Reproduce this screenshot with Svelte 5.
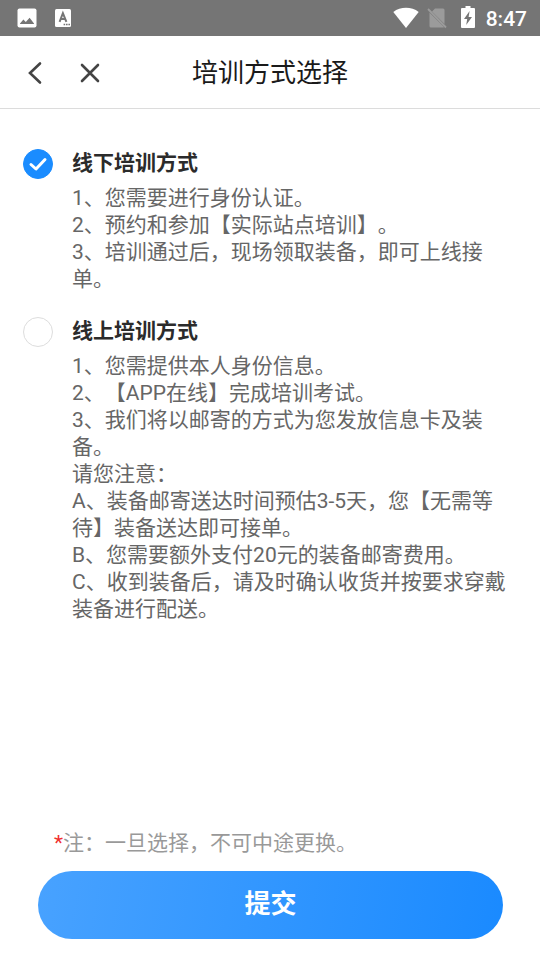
<script>
  const options = [
    {
      id: 'offline',
      title: '线下培训方式',
      lines: [
        '1、您需要进行身份认证。',
        '2、预约和参加【实际站点培训】。',
        '3、培训通过后，现场领取装备，即可上线接单。'
      ]
    },
    {
      id: 'online',
      title: '线上培训方式',
      lines: [
        '1、您需提供本人身份信息。',
        '2、【APP在线】完成培训考试。',
        '3、我们将以邮寄的方式为您发放信息卡及装备。',
        '请您注意：',
        'A、装备邮寄送达时间预估3-5天，您【无需等待】装备送达即可接单。',
        'B、您需要额外支付20元的装备邮寄费用。',
        'C、收到装备后，请及时确认收货并按要求穿戴装备进行配送。'
      ]
    }
  ];

  let selected = $state('offline');
</script>

<div class="screen">
  <div class="status">
    <div class="group left">
      <svg width="20" height="20" viewBox="0 0 20 20" aria-hidden="true">
        <rect x="0.5" y="0.5" width="19" height="19" rx="2" fill="#fff" />
        <path d="M3 16 L3 15.4 L6.4 11.4 L8.8 14 L12.6 9.8 L17 15.4 V16 Z" fill="#757575" />
      </svg>
      <svg width="16" height="20" viewBox="0 0 16 20" aria-hidden="true">
        <rect y="1" width="16" height="18" rx="1.5" fill="#fff" />
        <path d="M4.6 13.8 L7.9 5.2 L11.4 13.8 M5.8 11 H10.2" fill="none" stroke="#757575" stroke-width="2" />
        <path d="M8.6 16.5 h1.6 M11 16.5 h1.6 M13.4 16.5 h1.6" stroke="#757575" stroke-width="1.4" />
      </svg>
    </div>
    <div class="group right">
      <div class="group signal">
        <svg width="26" height="22" viewBox="0 0 26 22" aria-hidden="true">
          <path d="M0.3 5 C7.5 -0.6 18.5 -0.6 25.7 5 L13 21 Z" fill="#fff" />
        </svg>
        <svg width="20" height="22" viewBox="0 0 20 22" aria-hidden="true">
          <path d="M8 1.5 H16 Q17.5 1.5 17.5 3 V17 L5 4.5 Z M2.5 5.5 L17 20 Q16.6 20.5 16 20.5 H4 Q2.5 20.5 2.5 19 Z" fill="#9b9b9b" />
          <path d="M1 2 L19 20.5" stroke="#9b9b9b" stroke-width="1.8" />
        </svg>
      </div>
      <svg width="14" height="24" viewBox="0 0 14 24" aria-hidden="true">
        <path d="M4.5 0 H9.5 V2 H13 Q14 2 14 3 V21 Q14 22 13 22 H1 Q0 22 0 21 V3 Q0 2 1 2 H4.5 Z" fill="#fff" />
        <path d="M8.6 5 L3 13 H6.2 L5.2 19 L11 11 H7.6 Z" fill="#757575" />
      </svg>
      <span class="time">8:47</span>
    </div>
  </div>

  <header>
    <div class="nav">
      <button type="button" aria-label="返回">
        <svg width="24" height="24" viewBox="0 0 24 24">
          <path d="M16 2.5 L6 12 L16 21.5" />
        </svg>
      </button>
      <button type="button" aria-label="关闭">
        <svg width="24" height="24" viewBox="0 0 24 24">
          <path d="M4 4 L20 20 M20 4 L4 20" />
        </svg>
      </button>
    </div>
    <h1>培训方式选择</h1>
  </header>

  <form onsubmit={(e) => e.preventDefault()}>
    <div class="options">
      {#each options as option (option.id)}
        <label class="option">
          <span class="mark">
            <input type="radio" name="training" value={option.id} bind:group={selected} />
            {#if selected === option.id}
              <svg width="30" height="30" viewBox="0 0 30 30" aria-hidden="true">
                <path d="M8 15.5 L13 20 L22 10.5" />
              </svg>
            {/if}
          </span>
          <span class="copy">
            <span class="title">{option.title}</span>
            {#each option.lines as line}
              <span class="line">{line}</span>
            {/each}
          </span>
        </label>
      {/each}
    </div>

    <div class="bottom">
      <p><span class="star">*</span>注：一旦选择，不可中途更换。</p>
      <button type="submit">提交</button>
    </div>
  </form>
</div>

<style>
  :global(body) {
    background: #fff;
  }

  .screen {
    display: flex;
    flex-direction: column;
    min-height: 100vh;
    font-family: Roboto, 'Noto Sans CJK SC', sans-serif;
    text-spacing-trim: space-all;
    color: #666;
  }

  .status {
    display: flex;
    justify-content: space-between;
    align-items: center;
    height: 36px;
    padding: 0 13px 0 17px;
    background: #757575;
  }

  .group {
    display: flex;
    align-items: center;
  }

  .left {
    gap: 18px;
  }

  .right {
    gap: 11px;
  }

  .signal {
    gap: 8px;
    padding-right: 3px;
  }

  .time {
    padding-top: 2px;
    font-size: 21px;
    font-weight: 500;
    line-height: 34px;
    color: #fff;
  }

  header {
    display: grid;
    grid-template-columns: 1fr auto 1fr;
    align-items: center;
    box-sizing: border-box;
    height: 73px;
    padding-top: 2px;
    border-bottom: 1px solid #dcdcdc;
  }

  .nav {
    display: flex;
    gap: 30px;
    padding-left: 24px;
  }

  .nav button {
    display: flex;
    padding: 0;
    border: 0;
    background: none;
    cursor: pointer;
  }

  .nav path {
    fill: none;
    stroke: #444;
    stroke-width: 2.6;
    stroke-linecap: round;
  }

  h1 {
    margin: 0;
    font-size: 26px;
    font-weight: 400;
    line-height: 36px;
    color: #1a1a1a;
  }

  form {
    display: flex;
    flex: 1;
    flex-direction: column;
    justify-content: space-between;
  }

  .options {
    display: flex;
    flex-direction: column;
    gap: 24px;
    padding: 40px 30px 24px 23px;
  }

  .option {
    display: flex;
    gap: 19px;
    cursor: pointer;
  }

  .mark {
    display: grid;
    flex: none;
    width: 30px;
    height: 30px;
  }

  .mark > :global(*) {
    grid-area: 1 / 1;
  }

  .mark input {
    appearance: none;
    width: 30px;
    height: 30px;
    margin: 0;
    border: 1px solid #ddd;
    border-radius: 50%;
    background: #fff;
    cursor: pointer;
  }

  .mark input:checked {
    border-color: #1a8cff;
    background: #1a8cff;
  }

  .mark svg {
    z-index: 1;
    pointer-events: none;
  }

  .mark path {
    fill: none;
    stroke: #fff;
    stroke-width: 3;
    stroke-linecap: round;
    stroke-linejoin: round;
  }

  .copy {
    flex: 1;
    padding-top: 1px;
    font-size: 21px;
    line-height: 27px;
  }

  .title,
  .line {
    display: block;
  }

  .title {
    margin-bottom: 8px;
    font-weight: 700;
    color: #2b2b2b;
  }

  .bottom {
    padding: 0 37px 21px 38px;
  }

  p {
    margin: 0;
    padding: 0 16px 13px;
    font-size: 21px;
    line-height: 30px;
    color: #999;
  }

  .star {
    color: #f03030;
  }

  .bottom button {
    display: block;
    width: 100%;
    height: 68px;
    padding: 0 0 8px;
    border: 0;
    border-radius: 34px;
    background: linear-gradient(100deg, #48a2ff, #1a8aff);
    font: inherit;
    font-size: 26px;
    font-weight: 700;
    color: #fff;
    cursor: pointer;
  }
</style>
